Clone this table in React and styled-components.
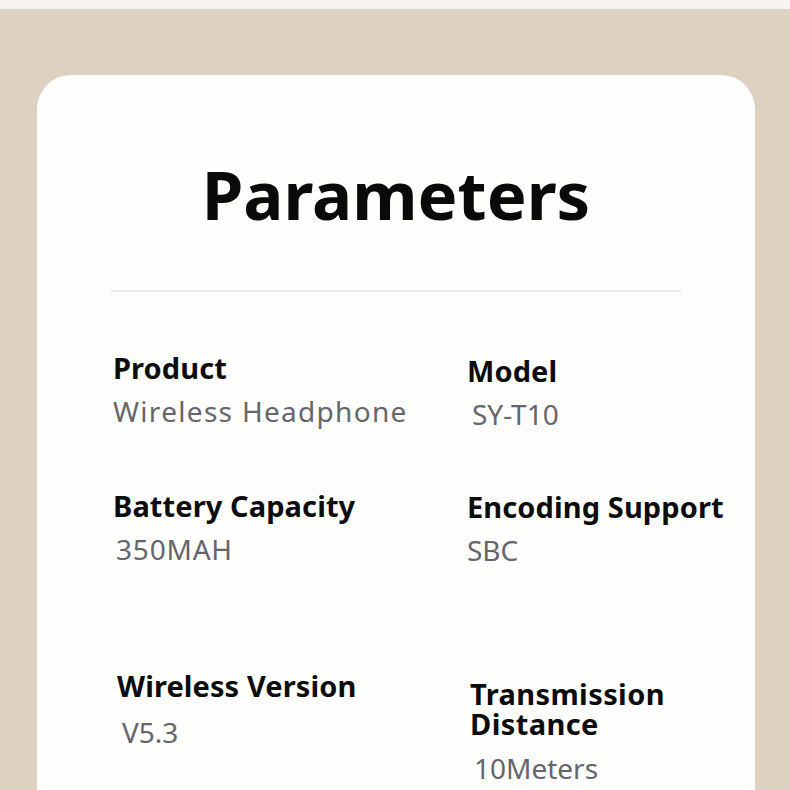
import React from "react";
import styled, { createGlobalStyle } from "styled-components";

const Global = createGlobalStyle`
  html, body { margin: 0; padding: 0; background: #ddd1c2; overflow: hidden; }
  body { font-family: "Noto Sans", "Open Sans", sans-serif; }
`;

const Page = styled.div`
  width: 790px;
  height: 790px;
  display: flex;
  flex-direction: column;
  overflow: hidden;
`;

const TopStrip = styled.div`
  height: 9px;
  flex: none;
  background: #f8f5f1;
`;

const Backdrop = styled.div`
  flex: 1;
  background: #ddd1c2;
  padding: 66px 35px 0 37px;
  display: flex;
`;

const Card = styled.div`
  flex: 1;
  background: #fefefd;
  border-radius: 34px 34px 0 0;
  display: flex;
  flex-direction: column;
  align-items: center;
  min-height: 800px;
`;

const Title = styled.h1`
  margin: 76px 0 0;
  font-size: 67px;
  line-height: 86px;
  font-weight: 700;
  color: #0a0a0a;
  letter-spacing: 0;
`;

const Divider = styled.hr`
  width: 570px;
  border: none;
  height: 2px;
  background: #ebe8e5;
  margin: 53px 0 0;
`;

const Specs = styled.div`
  align-self: stretch;
  display: grid;
  grid-template-columns: 354px 1fr;
  grid-template-rows: 138px 180px auto;
  padding: 61px 0 0 76px;
`;

const Item = styled.div`
  display: flex;
  flex-direction: column;
  margin-left: ${(p) => p.$dx || 0}px;
  margin-top: ${(p) => p.$dy || 0}px;
`;

const Label = styled.div`
  font-size: 29px;
  line-height: 30px;
  font-weight: 700;
  color: #0d0d0d;
  letter-spacing: ${(p) => (p.$wide ? 0.4 : 0.1)}px;
  max-width: ${(p) => (p.$wrap ? `${p.$wrap}px` : "none")};
`;

const Value = styled.div`
  font-size: 28px;
  line-height: 34px;
  font-weight: 400;
  color: #65656b;
  margin-top: ${(p) => p.$gap || 11}px;
  margin-left: ${(p) => p.$dx || 0}px;
  letter-spacing: ${(p) => p.$track || 0}px;
`;

const specs = [
  { label: "Product", value: "Wireless Headphone", track: 1.3 },
  { label: "Model", value: "SY-T10", dy: 3, vdx: 5 },
  { label: "Battery Capacity", value: "350MAH", vdx: 3, vtrack: 0.8 },
  { label: "Encoding Support", value: "SBC", dy: 1 },
  { label: "Wireless Version", value: "V5.3", dx: 4, vdx: 5, gap: 14 },
  { label: "Transmission Distance", wrap: 240, wide: true, value: "10Meters", dx: 3, dy: 8, vdx: 4, gap: 12 },
];

export default function App() {
  return (
    <Page>
      <Global />
      <TopStrip />
      <Backdrop>
        <Card>
          <Title>Parameters</Title>
          <Divider />
          <Specs>
            {specs.map((s, i) => (
              <Item key={i} $dx={s.dx} $dy={s.dy}>
                <Label $wrap={s.wrap} $wide={s.wide}>{s.label}</Label>
                <Value $dx={s.vdx} $gap={s.gap} $track={s.track || s.vtrack}>
                  {s.value}
                </Value>
              </Item>
            ))}
          </Specs>
        </Card>
      </Backdrop>
    </Page>
  );
}
